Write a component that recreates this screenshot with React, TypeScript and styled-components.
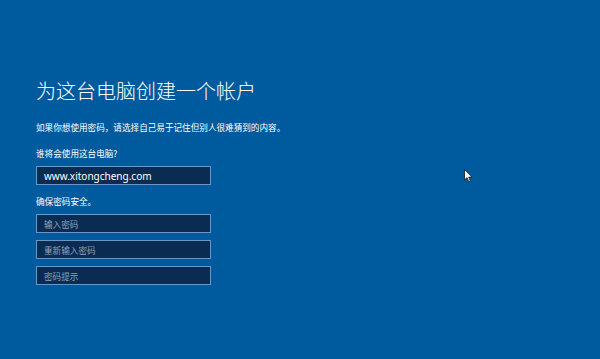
import styled, { createGlobalStyle } from 'styled-components';

const GlobalStyle = createGlobalStyle`
  html, body {
    margin: 0;
    padding: 0;
    background: #005a9e;
  }
`;

const Screen = styled.div`
  position: relative;
  width: 600px;
  height: 359px;
  box-sizing: border-box;
  padding: 79px 0 0 36px;
  background: #005a9e;
  color: #ffffff;
  font-family: "Noto Sans CJK SC", "Noto Sans", sans-serif;
  overflow: hidden;
`;

const Title = styled.h1`
  margin: 0;
  font-size: 20px;
  line-height: 24px;
  font-weight: 300;
  letter-spacing: 0;
`;

const Text = styled.p<{ $top: number }>`
  margin: ${({ $top }) => $top}px 0 0 0;
  font-size: 8.6px;
  line-height: 12px;
`;

const Field = styled.div<{ $top: number }>`
  width: 175px;
  height: 19px;
  box-sizing: border-box;
  margin-top: ${({ $top }) => $top}px;
  padding: 0 7px;
  display: flex;
  align-items: center;
  background: #0b2c52;
  border: 1px solid #6a98c6;
  font-size: 8.6px;
`;

const Value = styled.span`
  font-family: "Noto Sans", "Open Sans", sans-serif;
  font-size: 10px;
  color: #ffffff;
`;

const Placeholder = styled.span`
  color: #8ea3bb;
`;

const Cursor = styled.svg`
  position: absolute;
  left: 464px;
  top: 169px;
`;

export default function App() {
  return (
    <>
      <GlobalStyle />
      <Screen>
        <Title>为这台电脑创建一个帐户</Title>
        <Text $top={18}>如果你想使用密码，请选择自己易于记住但别人很难猜到的内容。</Text>
        <Text $top={14}>谁将会使用这台电脑?</Text>
        <Field $top={7}>
          <Value>www.xitongcheng.com</Value>
        </Field>
        <Text $top={10}>确保密码安全。</Text>
        <Field $top={7}>
          <Placeholder>输入密码</Placeholder>
        </Field>
        <Field $top={7}>
          <Placeholder>重新输入密码</Placeholder>
        </Field>
        <Field $top={7}>
          <Placeholder>密码提示</Placeholder>
        </Field>
        <Cursor width="9" height="14" viewBox="0 0 9 14">
          <path d="M0.5 0.5 L0.5 11 L3 8.6 L4.8 12.8 L6.4 12.1 L4.7 8.1 L8 8.1 Z" fill="#ffffff" stroke="#1a1a1a" strokeWidth="0.8" strokeLinejoin="round" />
        </Cursor>
      </Screen>
    </>
  );
}
